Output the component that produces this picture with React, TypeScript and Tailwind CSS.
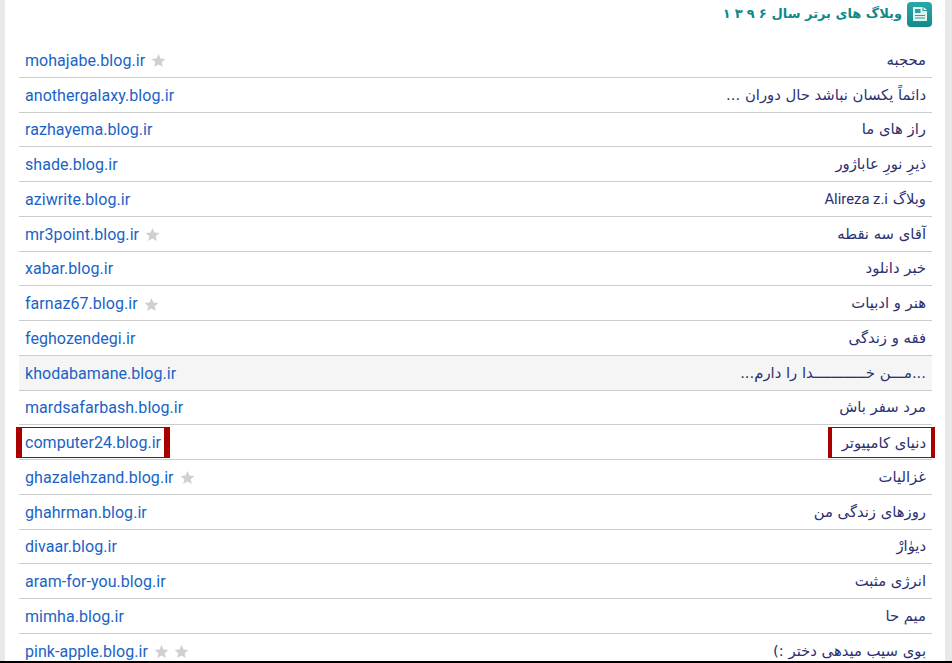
import type { ReactNode } from 'react';

const rows: { url: string; title: ReactNode; stars?: number; active?: boolean; marked?: boolean }[] = [
  { url: 'mohajabe.blog.ir', title: 'محجبه', stars: 1 },
  { url: 'anothergalaxy.blog.ir', title: 'دائماً یکسان نباشد حال دوران ...' },
  { url: 'razhayema.blog.ir', title: 'راز های ما' },
  { url: 'shade.blog.ir', title: 'ذیرِ نورِ عاباژور' },
  { url: 'aziwrite.blog.ir', title: <>وبلاگ <span className="font-['Roboto',sans-serif]">Alireza z.i</span></> },
  { url: 'mr3point.blog.ir', title: 'آقای سه نقطه', stars: 1 },
  { url: 'xabar.blog.ir', title: 'خبر دانلود' },
  { url: 'farnaz67.blog.ir', title: 'هنر و ادبیات', stars: 1 },
  { url: 'feghozendegi.ir', title: 'فقه و زندگی' },
  { url: 'khodabamane.blog.ir', title: '...مـــن خــــــــــــدا را دارم...', active: true },
  { url: 'mardsafarbash.blog.ir', title: 'مرد سفر باش' },
  { url: 'computer24.blog.ir', title: 'دنیای کامپیوتر', marked: true },
  { url: 'ghazalehzand.blog.ir', title: 'غزالیات', stars: 1 },
  { url: 'ghahrman.blog.ir', title: 'روزهای زندگی من' },
  { url: 'divaar.blog.ir', title: 'دیوٰارْ' },
  { url: 'aram-for-you.blog.ir', title: 'انرژی مثبت' },
  { url: 'mimha.blog.ir', title: 'میم حا' },
  { url: 'pink-apple.blog.ir', title: 'بوی سیب میدهی دختر :)', stars: 2 },
];

function Star() {
  return (
    <svg viewBox="0 0 24 24" className="w-[15px] h-[15px] fill-[#d0d0d0]">
      <path d="M12 1.500l3.200 7.200 7.800.8-5.900 5.200 1.700 7.700L12 18.400l-6.800 4 1.700-7.700L1 9.500l7.800-.8z" />
    </svg>
  );
}

export default function App() {
  return (
    <div className="h-[663px] overflow-hidden bg-[#e9e9e9] pl-[5px] pr-[7px] font-['Roboto','DejaVu_Sans',sans-serif]">
      <div className="h-[661px] overflow-hidden bg-white pl-[14px] pr-[13px]">
        {/* Header */}
        <div dir="rtl" className="flex items-center gap-[5px] h-[43px] pb-[15px]">
          <div className="w-[25px] h-[25px] rounded-[4px] bg-gradient-to-b from-[#2aa8a8] to-[#128a8a] flex items-center justify-center">
            <svg viewBox="0 0 14 14" className="w-[14px] h-[14px]">
              <path fill="#dff5f2" d="M0 0h9.500v4H14v10H0z" />
              <path fill="#dff5f2" d="M10.500 0L14 3h-3.500z" />
              <path fill="#2aa0a0" d="M2 2h5.500v4H2zM2 8h10v1H2zM2 10.500h10v1H2z" />
            </svg>
          </div>
          <h2 className="flex gap-[5px] text-[13px] font-bold text-[#0f8a8a] font-['DejaVu_Sans',sans-serif]">
            <span>وبلاگ های برتر سال</span>
            <span dir="ltr" className="flex gap-[4px]">
              <span>۱</span>
              <span>۳</span>
              <span>۹</span>
              <span>۶</span>
            </span>
          </h2>
        </div>

        {/* Blog table */}
        {rows.map(r => (
          <div
            key={r.url}
            className={`flex items-center justify-between h-[34.75px] border-b border-[#cccccc] ${r.active ? 'bg-[#f5f5f5]' : ''}`}
          >
            <div className={`flex items-center gap-[6px] pl-[6px] ${r.marked ? '' : 'pt-[2px]'}`}>
              <a
                className={`text-[16px] leading-[24px] text-[#1a63c6] tracking-[0.05px] ${r.marked ? 'border-x-[6px] border-y border-[#aa0000] -mx-[9px] px-[3px] pt-[3px] pb-[2px]' : ''}`}
              >
                {r.url}
              </a>
              {r.stars ? (
                <span className="flex gap-[5px]">
                  {Array.from({ length: r.stars }).map((_, i) => (
                    <Star key={i} />
                  ))}
                </span>
              ) : null}
            </div>
            <div
              dir="rtl"
              className={`text-[14.800px] leading-[20px] text-[#2b3070] font-['DejaVu_Sans',sans-serif] ${r.marked ? 'border-x-[4px] border-y border-[#aa0000] -mr-[3px] pr-[5px] pl-[10px] pt-[5px] pb-[4px]' : 'pr-[6px]'}`}
            >
              {r.title}
            </div>
          </div>
        ))}
      </div>
      <div className="h-[2px] -ml-[5px] -mr-[7px] bg-black" />
    </div>
  );
}
